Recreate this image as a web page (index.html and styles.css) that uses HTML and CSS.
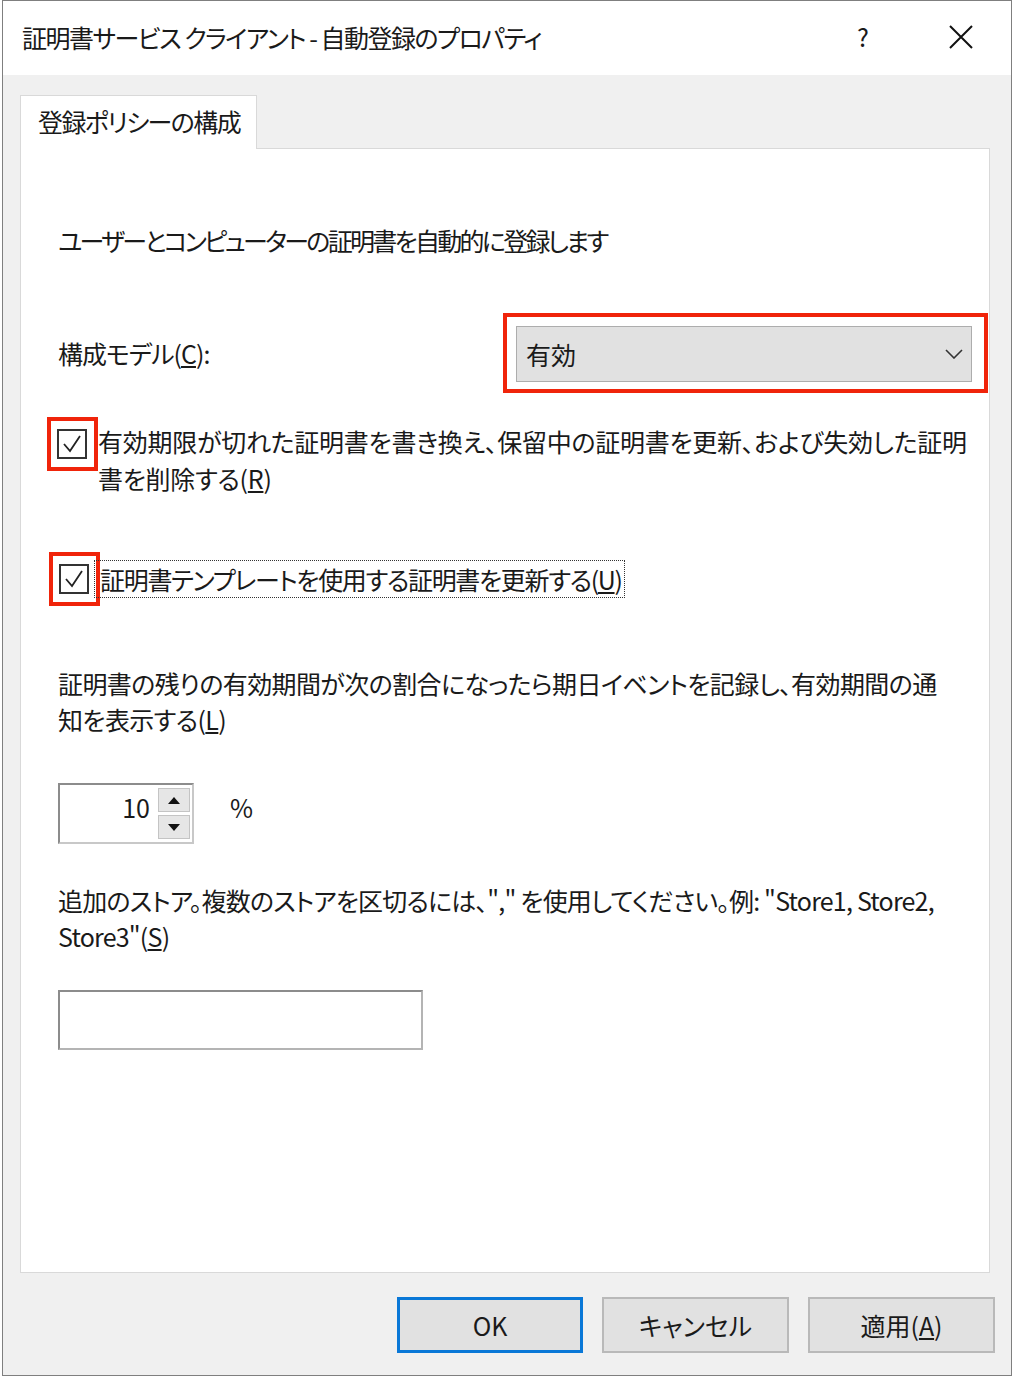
FILE: index.html
```html
<!DOCTYPE html>
<html lang="ja">
<head>
    <meta charset="UTF-8">
    <title>証明書サービス クライアント - 自動登録のプロパティ</title>
    <link rel="stylesheet" href="styles.css">
</head>
<body>
    <div class="window">
        <div class="titlebar">
            <span class="title">証明書サービス クライアント - 自動登録のプロパティ</span>
            <span class="help">?</span>
            <span class="close">
                <svg width="26" height="26" viewBox="0 0 26 26"><path d="M2 2 L24 24 M24 2 L2 24" stroke="#111" stroke-width="2" fill="none"/></svg>
            </span>
        </div>

        <div class="body">
            <div class="tabs">
                <div class="tab">登録ポリシーの構成</div>
            </div>

            <div class="panel">
                <p class="intro">ユーザーとコンピューターの証明書を自動的に登録します</p>

                <div class="model-row">
                    <span class="label">構成モデル(<u>C</u>):</span>
                    <div class="mark select-mark">
                        <div class="combo">
                            <span>有効</span>
                            <svg width="18" height="10" viewBox="0 0 18 10"><path d="M1 1 L9 9 L17 1" stroke="#333" stroke-width="1.6" fill="none"/></svg>
                        </div>
                    </div>
                </div>

                <div class="check-row first">
                    <div class="mark check-mark">
                        <span class="checkbox">
                            <svg width="26" height="26" viewBox="0 0 26 26"><path d="M5 13 L11 20 L21 5" stroke="#222" stroke-width="1.8" fill="none"/></svg>
                        </span>
                    </div>
                    <span class="check-text">有効期限が切れた証明書を書き換え、保留中の証明書を更新、および失効した証明<br>書を削除する(<u>R</u>)</span>
                </div>

                <div class="check-row second">
                    <div class="mark check-mark">
                        <span class="checkbox">
                            <svg width="26" height="26" viewBox="0 0 26 26"><path d="M5 13 L11 20 L21 5" stroke="#222" stroke-width="1.8" fill="none"/></svg>
                        </span>
                    </div>
                    <span class="check-text focused">証明書テンプレートを使用する証明書を更新する(<u>U</u>)</span>
                </div>

                <p class="para notify">証明書の残りの有効期間が次の割合になったら期日イベントを記録し、有効期間の通<br>知を表示する(<u>L</u>)</p>

                <div class="spin-row">
                    <div class="spinner">
                        <span class="value">10</span>
                        <div class="spin-btns">
                            <span class="spin-btn"><i class="up"></i></span>
                            <span class="spin-btn"><i class="down"></i></span>
                        </div>
                    </div>
                    <span class="percent">%</span>
                </div>

                <p class="para stores">追加のストア。複数のストアを区切るには、"," を使用してください。例: "Store1, Store2,<br>Store3"(<u>S</u>)</p>

                <div class="textbox"></div>
            </div>

            <div class="buttons">
                <button class="btn default">OK</button>
                <button class="btn">キャンセル</button>
                <button class="btn">適用(<u>A</u>)</button>
            </div>
        </div>
    </div>
</body>
</html>
```

FILE: styles.css
```css
body { margin: 0; background: #fff; font-family: "Noto Sans CJK JP", "Liberation Sans", sans-serif; font-feature-settings: "palt"; color: #1a1a1a; }
.window { margin-left: 2px; width: 1008px; height: 1374px; border: 1px solid #7f7f7f; background: #f0f0f0; display: flex; flex-direction: column; }

.titlebar { height: 74px; background: #fff; display: flex; align-items: center; padding-left: 19px; }
.title { font-size: 25px; letter-spacing: -1.5px; flex: 1; margin-top: -3px; }
.help { font-size: 25px; width: 20px; margin-right: 71px; margin-top: -5px; }
.close { width: 26px; height: 26px; margin-right: 37px; display: flex; margin-top: -3px; }

.body { flex: 1; padding: 20px 16px 0 17px; display: flex; flex-direction: column; }
.tabs { display: flex; }
.tab { position: relative; z-index: 1; height: 54px; width: 237px; background: #fff; border: 1px solid #d9d9d9; border-bottom: none; margin-bottom: -1px; font-size: 25px; letter-spacing: -1.6px; padding-left: 17px; line-height: 50px; box-sizing: border-box; }

.panel { height: 1125px; box-sizing: border-box; margin-right: 5px; background: #fff; border: 1px solid #d9d9d9; padding: 73px 1px 0 37px; }
.panel p { margin: 0; }
.intro { font-size: 25px; line-height: 36px; letter-spacing: -2.7px; }

.model-row { display: flex; align-items: center; margin-top: 55px; }
.label { font-size: 25px; letter-spacing: -1px; }
.mark { border: 4px solid #f0240a; box-sizing: border-box; }
.select-mark { margin-left: auto; width: 485px; height: 80px; padding: 9px 12px 7px 9px; }
.combo { height: 56px; box-sizing: border-box; background: #e1e1e1; border: 1px solid #adadad; display: flex; align-items: center; justify-content: space-between; padding: 0 8px 0 9px; font-size: 25px; }

.check-row { display: flex; align-items: flex-start; margin-left: -11px; }
.check-row.first { margin-top: 24px; }
.check-row.second { margin-top: 55px; margin-left: -9px; }
.check-mark { width: 51px; height: 54px; padding: 8px 0 0 6px; }
.checkbox { display: flex; width: 30px; height: 30px; border: 2px solid #333; box-sizing: border-box; background: #fff; }
.check-text { font-size: 25px; line-height: 37px; margin-top: 6px; letter-spacing: -0.25px; }
.check-text.focused { outline: 1px dotted #333; outline-offset: 0; padding: 0 2px 0 5px; margin-left: -5px; line-height: 36px; margin-top: 9px; letter-spacing: -1.3px; }

.para { font-size: 25px; line-height: 36px; letter-spacing: -0.6px; }
.notify { margin-top: 59px !important; }

.spin-row { display: flex; align-items: center; margin-top: 46px; }
.spinner { width: 136px; height: 61px; box-sizing: border-box; border: 2px solid #8c8c8c; border-right-color: #c8c8c8; border-bottom-color: #c8c8c8; display: flex; align-items: center; justify-content: flex-end; padding-right: 2px; }
.value { font-size: 25px; margin-right: 8px; margin-bottom: 14px; }
.spin-btns { display: flex; flex-direction: column; gap: 3px; }
.spin-btn { width: 32px; height: 24px; box-sizing: border-box; background: #e6e6e6; border: 1px solid #c4c4c4; display: flex; align-items: center; justify-content: center; }
.spin-btn i { width: 0; height: 0; border-left: 6px solid transparent; border-right: 6px solid transparent; }
.spin-btn .up { border-bottom: 7px solid #111; }
.spin-btn .down { border-top: 7px solid #111; }
.percent { font-size: 25px; margin-left: 36px; margin-bottom: 14px; }

.stores { margin-top: 38px !important; letter-spacing: -0.8px; }
.textbox { width: 365px; height: 60px; box-sizing: border-box; border: 2px solid #8c8c8c; border-right-color: #b4b4b4; border-bottom-color: #b4b4b4; margin-top: 36px; }

.buttons { display: flex; justify-content: flex-end; gap: 19px; margin-top: 24px; }
.btn { width: 187px; height: 56px; background: #e1e1e1; border: 2px solid #b9b9b9; font-family: inherit; font-feature-settings: "palt"; font-size: 25px; color: #1a1a1a; padding: 0; }
.btn.default { border: 3px solid #0a78d7; width: 186px; }
```
